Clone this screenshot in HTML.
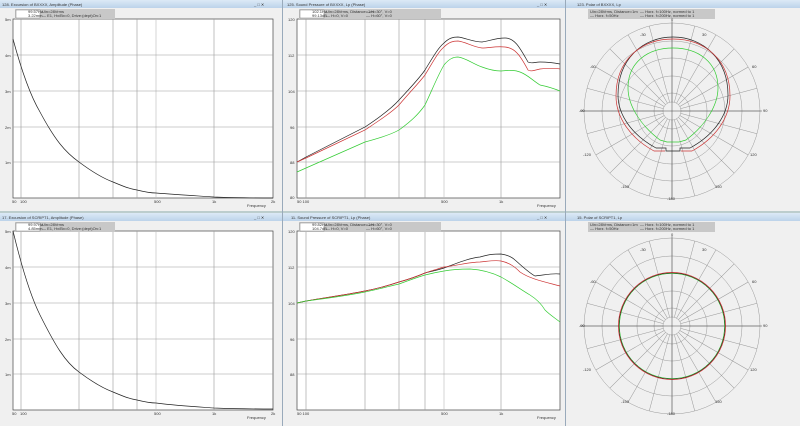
<!DOCTYPE html><html><head><style>
body{margin:0;width:800px;height:426px;overflow:hidden;background:#f0f0f0;font-family:"Liberation Sans",sans-serif}
svg{display:block}
text{font-family:"Liberation Sans",sans-serif;font-size:4px;fill:#333}
</style></head><body>
<svg width="800" height="426" viewBox="0 0 800 426" xmlns="http://www.w3.org/2000/svg">
<defs>
<linearGradient id="tb" x1="0" y1="0" x2="0" y2="1"><stop offset="0" stop-color="#dce9f6"/><stop offset="1" stop-color="#bcd3ea"/></linearGradient>
<g id="r1">
<rect x="13" y="19" width="260" height="179" fill="#fff" stroke="#444" stroke-width="0.7"/>
<g stroke="#999" stroke-width="0.6">
<line x1="21" y1="19" x2="21" y2="198"/><line x1="79" y1="19" x2="79" y2="198"/><line x1="113" y1="19" x2="113" y2="198"/><line x1="137" y1="19" x2="137" y2="198"/><line x1="156" y1="19" x2="156" y2="198" stroke="#bbb"/><line x1="214" y1="19" x2="214" y2="198"/>
<line x1="13" y1="55" x2="273" y2="55"/><line x1="13" y1="91" x2="273" y2="91"/><line x1="13" y1="127" x2="273" y2="127"/><line x1="13" y1="162" x2="273" y2="162"/>
</g></g>
<g id="r2">
<rect x="297" y="19" width="263" height="179" fill="#fff" stroke="#444" stroke-width="0.7"/>
<g stroke="#999" stroke-width="0.6">
<line x1="306" y1="19" x2="306" y2="198"/><line x1="365" y1="19" x2="365" y2="198"/><line x1="399" y1="19" x2="399" y2="198"/><line x1="425" y1="19" x2="425" y2="198"/><line x1="444" y1="19" x2="444" y2="198" stroke="#bbb"/><line x1="501" y1="19" x2="501" y2="198"/>
<line x1="297" y1="55" x2="560" y2="55"/><line x1="297" y1="91" x2="560" y2="91"/><line x1="297" y1="127" x2="560" y2="127"/><line x1="297" y1="162" x2="560" y2="162"/>
</g></g>
<g id="polar" fill="none" stroke="#999" stroke-width="0.5">
<circle r="88"/><circle r="70"/><circle r="53"/><circle r="35"/><circle r="18"/><circle r="9"/>
<g id="sp"><line y1="-9" y2="-88"/><line y1="-9" y2="-88" transform="rotate(15)"/><line y1="-9" y2="-88" transform="rotate(30)"/><line y1="-9" y2="-88" transform="rotate(45)"/><line y1="-9" y2="-88" transform="rotate(60)"/><line y1="-9" y2="-88" transform="rotate(75)"/></g>
<use href="#sp" transform="rotate(90)"/><use href="#sp" transform="rotate(180)"/><use href="#sp" transform="rotate(270)"/>
<line x1="-92" x2="90" stroke="#444"/><line y1="-90" y2="88" stroke="#444"/>
</g>
</defs>
<g>
<rect x="0" y="0" width="282" height="8" fill="url(#tb)"/><rect x="283" y="0" width="282" height="8" fill="url(#tb)"/><rect x="566" y="0" width="234" height="8" fill="url(#tb)"/>
<rect x="0" y="213" width="282" height="8" fill="url(#tb)"/><rect x="283" y="213" width="282" height="8" fill="url(#tb)"/><rect x="566" y="213" width="234" height="8" fill="url(#tb)"/>
<line x1="0" y1="212" x2="800" y2="212" stroke="#8aa" stroke-width="1"/>
<line x1="282.5" y1="0" x2="282.5" y2="426" stroke="#9ab" stroke-width="1"/><line x1="565.5" y1="0" x2="565.5" y2="426" stroke="#9ab" stroke-width="1"/>
<text x="2" y="6" fill="#3a5a8a">128. Excursion of BXXXX, Amplitude (Phase)</text>
<text x="287" y="6" fill="#3a5a8a">125. Sound Pressure of BXXXX, Lp (Phase)</text>
<text x="577" y="6" fill="#3a5a8a">123. Polar of BXXXX, Lp</text>
<text x="2" y="219" fill="#3a5a8a">17. Excursion of SCRIPT1, Amplitude (Phase)</text>
<text x="291" y="219" fill="#3a5a8a">11. Sound Pressure of SCRIPT1, Lp (Phase)</text>
<text x="577" y="219" fill="#3a5a8a">15. Polar of SCRIPT1, Lp</text>
<g font-size="5" fill="#222"><text x="254" y="6">_ □ ✕</text><text x="537" y="6">_ □ ✕</text><text x="254" y="219">_ □ ✕</text><text x="537" y="219">_ □ ✕</text></g>
</g>
<use href="#r1"/><use href="#r2"/><use href="#r1" y="212"/><use href="#r2" y="212"/>
<g fill="#c8c8c8"><rect x="15" y="9" width="100" height="10"/><rect x="299" y="9" width="142" height="10"/><rect x="15" y="222" width="100" height="10"/><rect x="299" y="222" width="142" height="10"/>
<rect x="588" y="9" width="127" height="10"/><rect x="588" y="222" width="127" height="10"/></g>
<g fill="#fff" stroke="#666" stroke-width="0.4"><rect x="16" y="10" width="24" height="8"/><rect x="300" y="10" width="24" height="8"/><rect x="16" y="223" width="24" height="8"/><rect x="300" y="223" width="24" height="8"/></g>
<g font-size="3.5">
<text x="28" y="13">99.57Hz</text><text x="28" y="17">3.22mm</text><text x="42" y="13">Uin=28Vrms</text><text x="42" y="17">— E1, Hx/Bx=0, Drive:(dept)On:1</text>
<text x="312" y="13">102.1Hz</text><text x="312" y="17">99.13dB</text><text x="326" y="13">Uin=28Vrms, Distance=1m</text><text x="326" y="17">— H=0, V=0</text><text x="366" y="13">— H=30°, V=0</text><text x="366" y="17">— H=60°, V=0</text>
<text x="28" y="226">99.97Hz</text><text x="28" y="230">4.85mm</text><text x="42" y="226">Uin=28Vrms</text><text x="42" y="230">— E1, Hx/Bx=0, Drive:(dept)On:1</text>
<text x="312" y="226">99.82Hz</text><text x="312" y="230">104.7dB</text><text x="326" y="226">Uin=28Vrms, Distance=1m</text><text x="326" y="230">— H=0, V=0</text><text x="366" y="226">— H=30°, V=0</text><text x="366" y="230">— H=60°, V=0</text>
<text x="590" y="13">Uin=28Vrms, Distance=1m</text><text x="590" y="17">— Horz. f=50Hz</text><text x="640" y="13">— Horz. f=100Hz, normed to 1</text><text x="640" y="17">— Horz. f=200Hz, normed to 1</text>
<text x="590" y="226">Uin=28Vrms, Distance=1m</text><text x="590" y="230">— Horz. f=50Hz</text><text x="640" y="226">— Horz. f=100Hz, normed to 1</text><text x="640" y="230">— Horz. f=200Hz, normed to 1</text>
</g>
<g font-size="3.5">
<text x="5" y="21">5m</text><text x="5" y="57">4m</text><text x="5" y="93">3m</text><text x="5" y="129">2m</text><text x="5" y="164">1m</text>
<text x="12" y="203">50</text><text x="20" y="203">100</text><text x="154" y="203">500</text><text x="212" y="203">1k</text><text x="271" y="203">2k</text><text x="247" y="207">Frequency</text>
<text x="288" y="21">120</text><text x="288" y="57">112</text><text x="288" y="93">104</text><text x="290" y="129">96</text><text x="290" y="164">88</text><text x="290" y="199">80</text>
<text x="297" y="203">50 100</text><text x="441" y="203">500</text><text x="499" y="203">1k</text><text x="537" y="207">Frequency</text>
<text x="5" y="233">5m</text><text x="5" y="269">4m</text><text x="5" y="305">3m</text><text x="5" y="341">2m</text><text x="5" y="376">1m</text>
<text x="12" y="415">50</text><text x="20" y="415">100</text><text x="154" y="415">500</text><text x="212" y="415">1k</text><text x="271" y="415">2k</text><text x="247" y="419">Frequency</text>
<text x="288" y="233">120</text><text x="288" y="269">112</text><text x="288" y="305">104</text><text x="290" y="341">96</text><text x="290" y="376">88</text>
<text x="297" y="415">50 100</text><text x="441" y="415">500</text><text x="499" y="415">1k</text><text x="537" y="419">Frequency</text>
</g>
<g fill="none" stroke-width="0.7">
<path d="M13,39 C20,65 30,95 40,112 C55,140 65,152 79,162 C95,174 105,179 113,182 C125,187 130,189 137,190 C145,192 150,193 156,193 C180,195 200,196 214,197 C240,198 260,198 273,198" stroke="#222"/>
<path d="M297,162 L306,157 L365,127 C380,117 392,108 399,100 C410,88 418,80 425,70 C433,57 438,48 444,43 C449,38 453,37 458,37 C466,38 473,42 482,42 C490,41 495,38 505,38 C515,38 520,48 528,62 C531,64 535,62 540,62 C550,62 555,63 560,64" stroke="#222"/>
<path d="M297,162 L306,158 L365,130 C380,120 392,112 399,105 C410,92 418,84 425,75 C433,62 438,52 444,47 C449,42 453,41 458,41 C466,42 473,47 482,48 C490,48 495,46 505,47 C515,48 520,55 528,70 C531,72 535,70 540,69 C550,68 555,68 560,69" stroke="#c33"/>
<path d="M297,172 L306,168 L365,142 C380,138 392,134 399,130 C410,122 418,115 425,105 C433,88 438,75 444,65 C449,59 453,57 458,57 C466,58 473,64 482,67 C490,70 495,71 501,71 C510,70 515,70 520,72 C528,75 532,80 540,85 C550,87 555,89 560,91" stroke="#3c3"/>
<path d="M13,231 C20,260 30,295 40,315 C55,345 65,362 79,372 C95,384 105,389 113,392 C125,397 130,399 137,400 C145,402 150,403 156,403 C180,406 200,407 214,408 C240,409 260,409 273,409" stroke="#222"/>
<path d="M297,303 L306,301 C330,297 350,294 365,291 C380,288 390,285 399,282 C410,279 418,276 425,273 C433,271 438,270 444,268 C460,262 470,258 480,257 C490,254 495,254 501,254 C508,255 512,257 515,260 C522,266 528,272 535,276 C545,275 552,273 560,274" stroke="#222"/>
<path d="M297,303 L306,301 C330,297 350,294 365,291 C380,288 390,285 399,282 C410,279 418,276 425,273 C433,270 438,269 444,267 C460,265 470,262 480,262 C490,261 495,260 501,261 C510,263 515,267 520,272 C530,279 545,282 560,286" stroke="#c33"/>
<path d="M297,303 L306,301 C330,298 350,295 365,292 C380,289 390,286 399,284 C410,280 418,277 425,275 C433,273 438,272 444,271 C455,269 462,269 470,269 C485,270 495,274 501,277 C512,283 520,289 530,295 C538,300 542,305 545,310 C550,315 555,318 560,322" stroke="#3c3"/>
</g>
<use href="#polar" transform="translate(672,111)"/>
<use href="#polar" transform="translate(672,326)"/>
<g font-size="3.5"><text x="671" y="21">0</text><text x="640" y="36">-30</text><text x="702" y="36">30</text><text x="590" y="68">-60</text><text x="752" y="68">60</text><text x="579" y="112">-90</text><text x="763" y="112">90</text><text x="583" y="156">-120</text><text x="750" y="156">120</text><text x="621" y="188">-150</text><text x="715" y="188">150</text><text x="667" y="200">-180</text>
<text x="671" y="236">0</text><text x="640" y="251">-30</text><text x="702" y="251">30</text><text x="590" y="283">-60</text><text x="752" y="283">60</text><text x="579" y="327">-90</text><text x="763" y="327">90</text><text x="583" y="371">-120</text><text x="750" y="371">120</text><text x="621" y="403">-150</text><text x="715" y="403">150</text><text x="667" y="415">-180</text></g>
<g fill="none" stroke-width="0.7">
<path d="M666,148 L656,148 C632,135 618,115 618,95 C618,60 642,37 673,37 C704,37 728,60 728,95 C728,115 714,135 690,148 L680,148 L680,151 L666,151 Z" stroke="#222"/>
<path d="M665,151 L654,151 C630,138 616,117 616,96 C616,60 641,39 673,39 C705,39 730,60 730,96 C730,117 716,138 692,151 L681,151" stroke="#c33"/>
<path d="M667,142 L660,140 C640,125 628,105 628,88 C628,62 648,48 673,48 C698,48 718,62 718,88 C718,105 706,125 686,140 L679,142 Z" stroke="#3c3"/>
<circle cx="672" cy="326" r="53" stroke="#222"/><circle cx="672" cy="326" r="53.6" stroke="#c33"/><circle cx="672" cy="326" r="52.5" stroke="#3c3" stroke-width="0.5"/>
</g>
</svg>
</body></html>
